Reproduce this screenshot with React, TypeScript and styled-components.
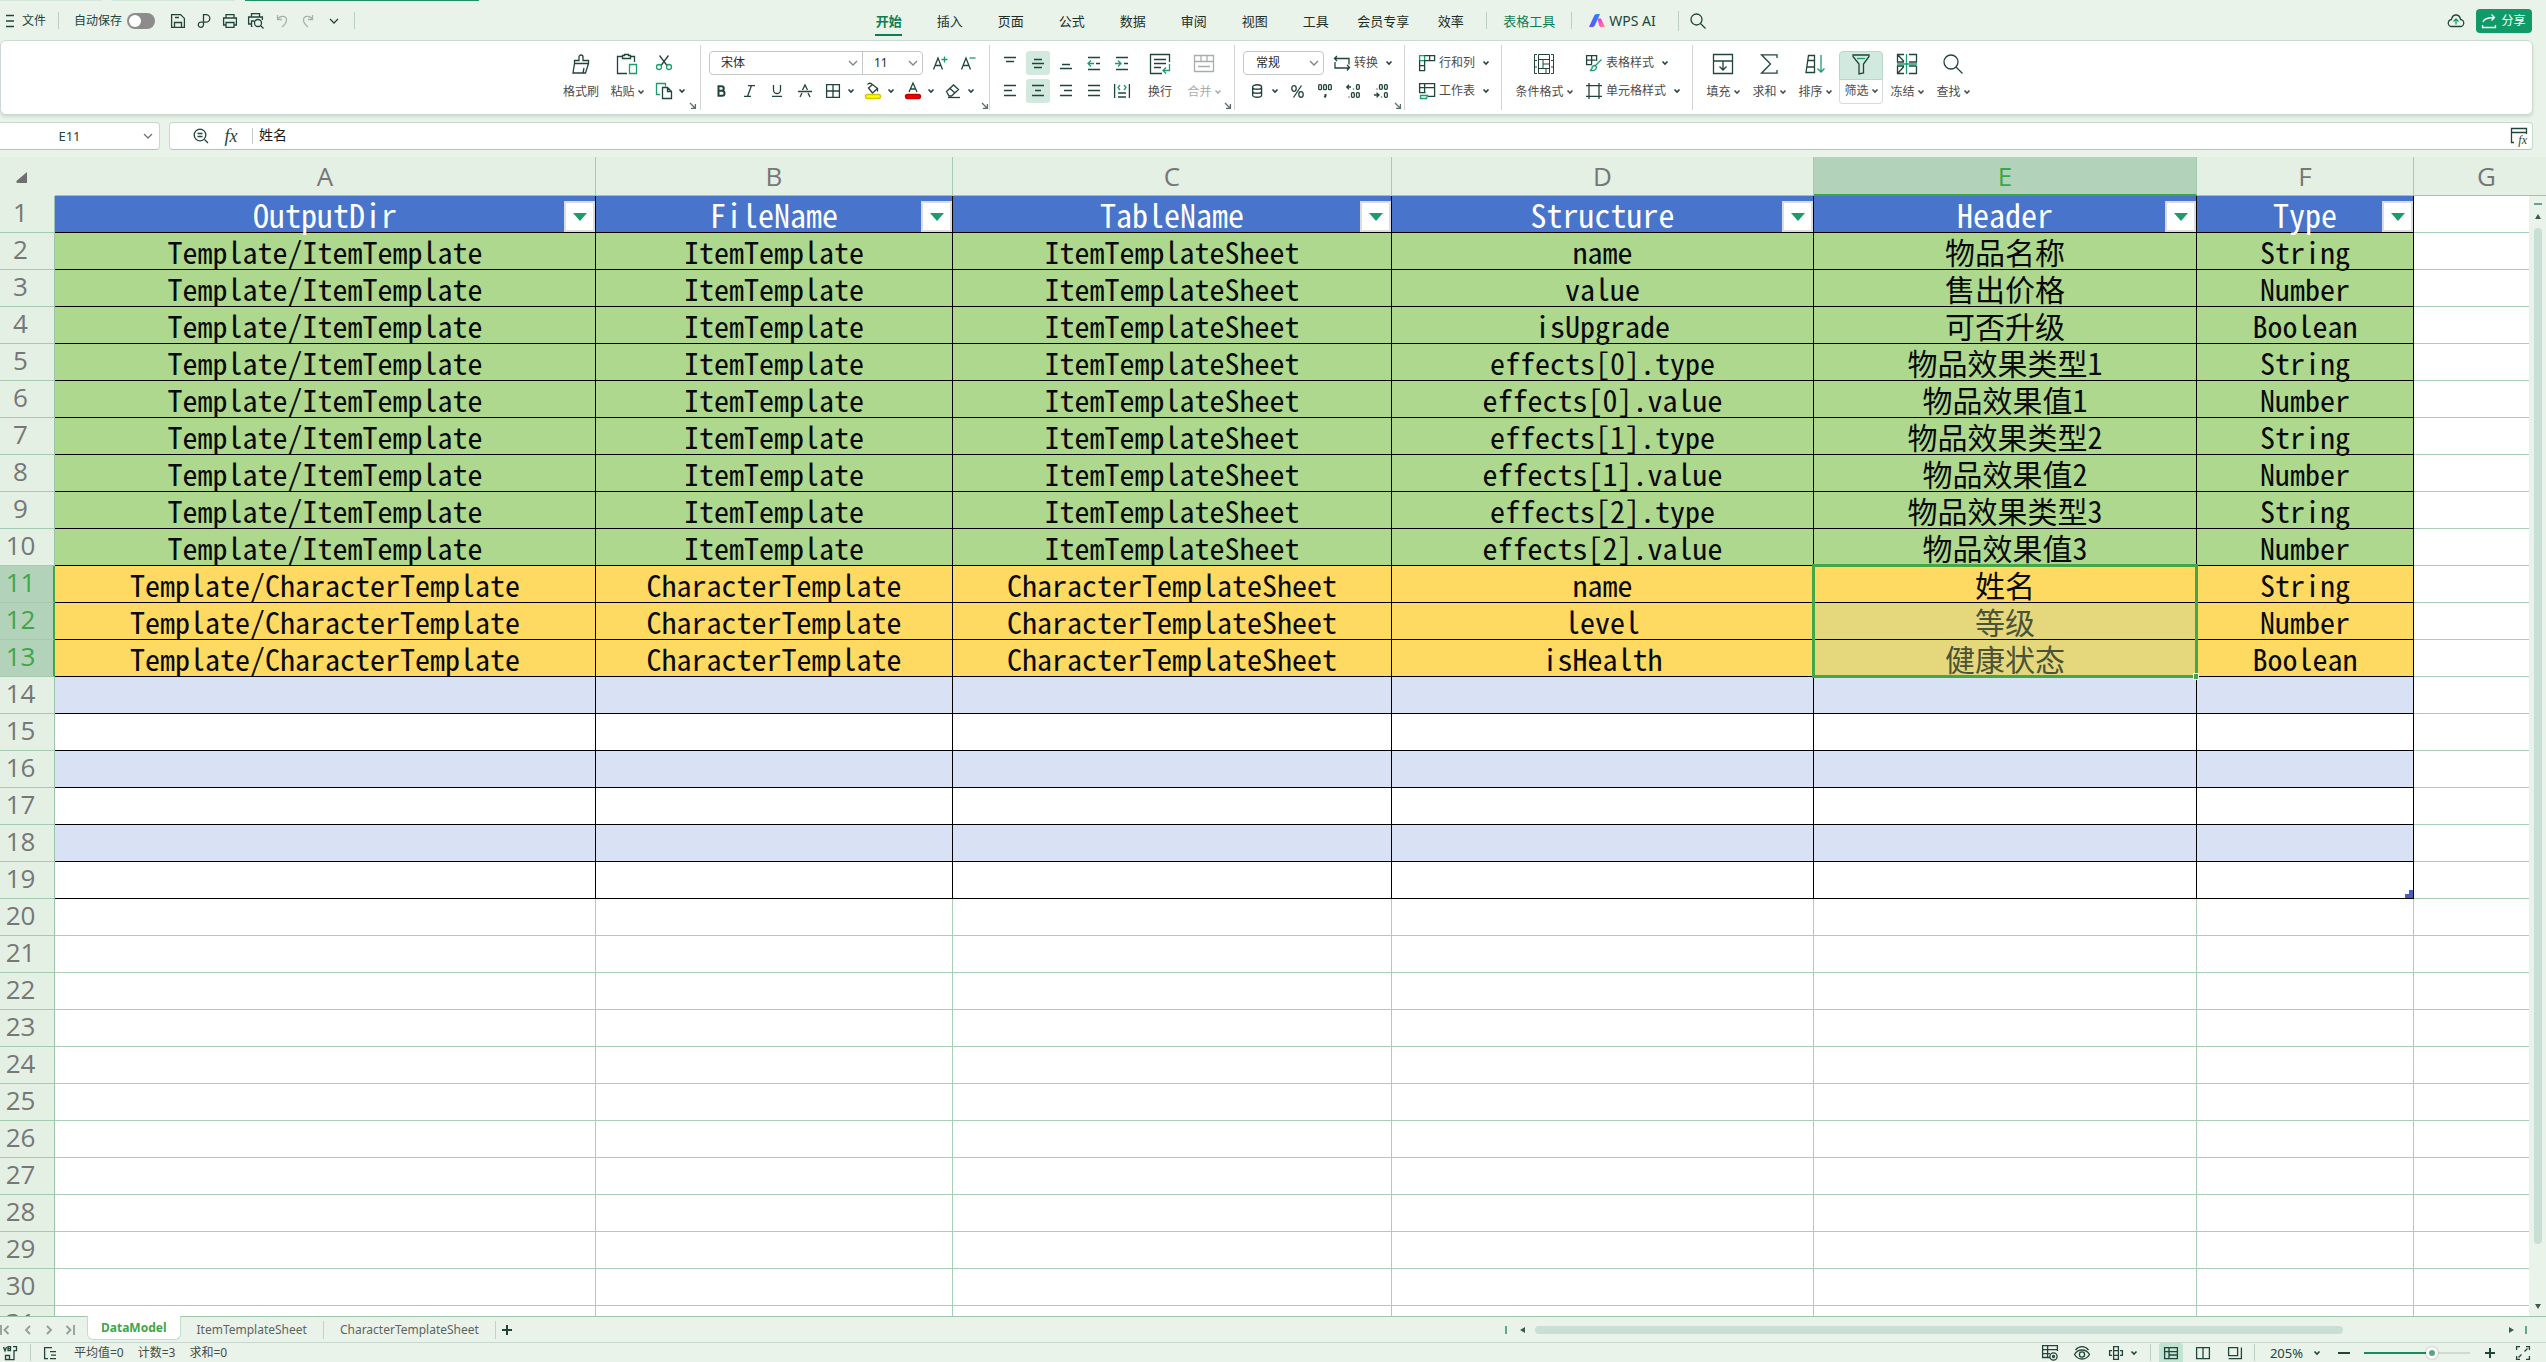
import React from "react";
import styled, { createGlobalStyle, css } from "styled-components";

const ink = "#21453a";
const accent = "#1b9c6b";
const brand = "#0f7d53";
const line = "#a9cfb8";
const ui = `"Noto Sans", "Noto Sans CJK SC", sans-serif`;
const cellFont = `"Noto Sans Mono CJK SC", "Liberation Mono", "Noto Sans CJK SC", monospace`;

const Global = createGlobalStyle`
  *, *::before, *::after { box-sizing: border-box; }
  html, body { margin: 0; height: 100%; overflow: hidden; }
  body { background: #eaf3ea; color: ${ink}; font-family: ${ui}; font-size: 12px; line-height: 16px; }
  button, input, select { font: inherit; color: inherit; margin: 0; padding: 0; border: 0; background: none; }
`;

const Page = styled.div`
  display: flex;
  flex-direction: column;
  height: 100vh;
  overflow: hidden;
`;
const Spacer = styled.span<{ $w: number }>`
  flex: none;
  width: ${(p) => p.$w}px;
`;

/* ---------- icons ---------- */
const Svg = styled.svg`
  display: block;
  flex: none;
  overflow: visible;
  fill: none;
  stroke: currentColor;
  stroke-width: 1.3;
`;
const g = { stroke: accent };

const icons: Record<string, [number, number, React.ReactNode]> = {
  menu: [8, 12, <path d="M0 .5h8M0 6h8M0 11.500h8" />],
  save: [14, 14, <path d="M.600 13.400V.600h9l3.800 3.800v9zM3.500 13V8.500h7V13M4 3.500h4" />],
  output: [14, 14, <path d="M6.500 .600h2.500a3.800 3.800 0 0 1 0 7.600H4.500a2.600 2.600 0 1 0 2 2.600zM6.500 .600v10" />],
  print: [14, 14, <path d="M3 4V.600h8V4M3 11H.600V4h12.800v7H11M3 8.500h8v4.900H3z" />],
  preview: [16, 16, <><path d="M3.500 4V.600h8V4M3.500 11H.600V4h13.800v3M4.500 13.400h-1V8h3" /><circle cx="10" cy="10" r="3.500" /><path d="M12.500 12.500l3 3" /></>],
  undo: [12, 14, <path d="M1.500 1v4.500H6M1.500 5.500C4 1 10.500 1.500 10.500 6c0 3-2 5-4.500 7" />],
  redo: [12, 14, <path d="M10.500 1v4.500H6M10.500 5.500C8 1 1.500 1.500 1.500 6c0 3 2 5 4.500 7" />],
  down: [10, 6, <path d="M1 1l4 4 4-4" />],
  caret: [6, 4, <path d="M.5 .500l2.500 2.500L5.500 .500" strokeWidth="1.600" />],
  search: [16, 16, <><circle cx="6.500" cy="6.500" r="5.500" /><path d="M10.500 10.500l5 5" /></>],
  zoomFx: [16, 16, <><circle cx="7" cy="7" r="5.800" /><path d="M11.500 11.500l3.500 3.500M4.500 5.500h5M4.500 8.500h5" /></>],
  cloud: [16, 14, <><path d="M4 12.500a3.500 3.500 0 0 1-.500-7C4.500-.500 11.500-.500 12.500 5.500a3.500 3.500 0 0 1-.500 7z" /><path style={g} d="M8 10.500v-5M5.500 7.500L8 5l2.500 2.500" /></>],
  share: [14, 14, <path d="M1 8C2 4.500 6 3.500 12.500 3.500M9.500 .500l3 3-3 3M.500 11v2.500h13V11" />],
  brush: [20, 20, <path d="M3.500 9.500v-3H8V3a2 2 0 0 1 4 0v3.500h5.500v3zM3.500 9.500L2 19h12.500l3-9.500M13 14l-1 5" />],
  paste: [20, 20, <><path d="M5 2.500H.500v17H10M14 2.500h3.500V8M5.500 4.500v-3h2V.500h4v1h2v3z" /><path style={g} d="M12.500 10.500h7v9h-7z" /></>],
  cut: [16, 16, <><path d="M3.500 .500l7.500 10M12.500 .500L5 10.500" /><g style={g}><circle cx="3" cy="12" r="2.500" /><circle cx="13" cy="12" r="2.500" /></g></>],
  copy: [16, 16, <><path style={g} d="M4 11.500H.500V.500h9v3" /><path d="M6.500 4.500h5l4 4v7h-9zM11.500 4.500v4h4" /></>],
  bigger: [14, 14, <><path d="M.500 13.500L5 2l4.500 11.500M2.500 9.500H8" /><path style={g} d="M8.500 3.500h6M11.500 .500v6" /></>],
  smaller: [14, 14, <><path d="M.500 13.500L5 2l4.500 11.500M2.500 9.500H8" /><path style={g} d="M8.500 2h6" /></>],
  bold: [8, 12, <path strokeWidth="2" d="M1.500 1.200h3a2.300 2.300 0 0 1 0 4.600h-3zM1.500 5.800h3.500a2.500 2.500 0 0 1 0 5h-3.500z" />],
  italic: [11, 12, <path d="M4 .600h7M0 11.400h7M7.500 .600l-4 10.800" />],
  under: [10, 12, <path d="M1.500 0v5a3.500 3.500 0 0 0 7 0V0M0 11.400h10" />],
  strike: [14, 12, <path d="M2 12l2-4M4.500 5L7 0l2.500 5M10 8l2 4M0 6.500h14" />],
  borders: [14, 14, <path d="M.600 .600h12.800v12.800H.600zM7 .600v12.800M.600 7h12.800" />],
  bucket: [16, 16, <><path d="M3.500 5l4-3.500 5 4-5 4.500zM7.500 2C6-.500 3.500 0 2.500 1.500M12.500 5.500v3" /><rect x=".500" y="11.500" width="15" height="4" rx="2" fill="#ffff00" stroke="#cfc800" /></>],
  fontColor: [16, 16, <><path d="M4 9L8 0l4 9M5.500 6h5" /><rect x=".500" y="11.500" width="15" height="4" rx="2" fill="#f00000" stroke="#c40000" /></>],
  eraser: [16, 14, <><path d="M1.500 7.500l7-6.500 5 4.500-7 6.500H4zM5 4.500l5 4.500" /><path d="M3 13.500h12" /></>],
  top: [14, 14, <path d="M1 1.500h12M3 5.500h8" />],
  middle: [14, 14, <path d="M3 3.500h8M1 7.500h12M3 11.500h8" />],
  bottom: [14, 14, <path d="M3 8.500h8M1 12.500h12" />],
  outdent: [14, 14, <><path d="M1 1.500h12M9 7.500h4M1 13.500h12" /><path style={g} d="M7 7.500H1M4 4.500l-3 3 3 3" /></>],
  indent: [14, 14, <><path d="M1 1.500h12M9 7.500h4M1 13.500h12" /><path style={g} d="M0 7.500h6M3 4.500l3 3-3 3" /></>],
  left: [14, 14, <path d="M1 1.500h12M1 6.500h8M1 11.500h12" />],
  center: [14, 14, <path d="M1 1.500h12M4 6.500h6M1 11.500h12" />],
  right: [14, 14, <path d="M1 1.500h12M5 6.500h8M1 11.500h12" />],
  justify: [14, 14, <path d="M1 1.500h12M1 6.500h12M1 11.500h12" />],
  spread: [16, 14, <><path d="M.600 0v14M15.400 0v14M4 9h8M4 13h8" /><path style={g} d="M6 1L4 3.500 6 6M10 1l2 2.500L10 6" /></>],
  wrap: [20, 20, <><path d="M12 19.500H.500V.500h19V8M4 5.500h12M4 9.500h12M4 13.500h7" /><path style={g} d="M19.500 10v6.500h-6M16 13.500l-3 3 3 3" /></>],
  merge: [20, 18, <path d="M.500 .500h19v16H.500zM.500 6.500h19M7 .500v6M13 .500v6M4 11.500h12" />],
  convert: [16, 16, <path d="M3 1L.500 3.500 3 6M.500 3.500H15v6M13 10l2.500 2.500L13 15.500M15 13H1V7" />],
  coin: [10, 14, <path d="M.600 3c0-3 9-3 9 0v8c0 3-9 3-9 0zM.600 3c0 3 9 3 9 0M.600 7c0 3 9 3 9 0" />],
  percent: [13, 13, <><ellipse cx="3" cy="3.500" rx="2.200" ry="2.800" /><ellipse cx="10" cy="9.500" rx="2.200" ry="2.800" /><path d="M10.500 .500l-8 12" /></>],
  thousand: [14, 14, <><rect x=".700" y=".700" width="2.800" height="5" rx="1" /><rect x="5.600" y=".700" width="2.800" height="5" rx="1" /><rect x="10.500" y=".700" width="2.800" height="5" rx="1" /><path strokeWidth="2" d="M7.500 10v2l-1 1.500" /></>],
  decUp: [14, 14, <><path d="M3 .700L.700 3 3 5.400M.700 3H5M7.500 5.500v-1" /><rect x="10.500" y=".700" width="2.800" height="4.600" rx="1" /><path d="M3 13.500v-1" /><rect x="5.500" y="8.700" width="2.800" height="4.600" rx="1" /><rect x="10.500" y="8.700" width="2.800" height="4.600" rx="1" /></>],
  decDown: [14, 14, <><path d="M3 5.500v-1" /><rect x="5.500" y=".700" width="2.800" height="4.600" rx="1" /><rect x="10.500" y=".700" width="2.800" height="4.600" rx="1" /><path d="M2.500 8.700L5 11l-2.500 2.400M5 11H0M7.500 13.500v-1" /><rect x="10.500" y="8.700" width="2.800" height="4.600" rx="1" /></>],
  rowcol: [16, 16, <><path style={g} d="M.600 .600h5v5h-5z" /><path d="M5.600 .600h10v5h-10M10.600 .600v5M.600 5.600v10h5v-10M.600 10.600h5" /></>],
  worksheet: [16, 16, <><path d="M.600 10V.600h15v12.800H9M.600 4.600h15M5.600 .600v9.400M.600 9.600h6" /><path style={g} d="M1.500 12.500h7l-1 3h-6z" /></>],
  condFormat: [20, 20, <path strokeWidth="1" d="M3 .500H.500v6H3M.500 6.500v6.500H3M.500 13v6.500H3M17 .500h2.500v6H17M19.500 6.500v6.500H17M19.500 13v6.500H17M4.500 .500h11v19h-11zM4.500 5.500h11M9 10h6.500M4.500 14.500h11M9 5.500v9M12 14.500v5" />],
  tableStyle: [16, 16, <><path d="M6 9.600H.600V.600h10V6M.600 5.100h9M5.600 .600v9" /><path style={g} d="M15.500 4.500l-6 6M9 10.500c-2 0-3 1-3 3l-1.500 2c3 .500 6-.500 6-3.500z" /></>],
  cellStyle: [16, 16, <path d="M3 0v16M13 0v16M0 2.600h16M0 13.400h16" />],
  fill: [20, 20, <path d="M.500 .500h19V7H.500zM5 7H.500v12.500h19V7H15M10 7v8.500M6.500 12.500L10 16l3.500-3.500" />],
  sum: [18, 20, <path d="M17 4V.800H1.500L10.500 10 1.500 19.200H17V16" />],
  sort: [20, 20, <><path d="M1 18.500L3.500 1.500h6v17zM3 6.500h6.500M2 13h7.500" /><path style={g} d="M16 1v17M12.500 14.500L16 18l3.500-3.500" /></>],
  filter: [18, 20, <><path d="M1 1h16v1.500L11.500 10v9L7 20V10L1 2.500z" /><path style={g} d="M5 4.500h8" /></>],
  freeze: [20, 20, <><path d="M7 .500H.500V8H7M12 .500h7.500V8H12M19.500 12v7.500H12M12 12h7.500M7 19.500H.500V12H7M1 1l6 6.500M7 12.500L1 19" /><path style={g} d="M0 10h20M9.500 0v20" /></>],
  find: [20, 20, <><circle cx="8" cy="8" r="7" /><path d="M13 13l6.500 6.500" /></>],
  launcher: [6, 6, <path stroke="#5d6d67" d="M0 0l5 5M5.400 1v4.400H1" />],
  fxPanel: [16, 16, <path d="M3 14.500H.500V.500h15V6M.500 4.500h15" />],
  first: [10, 10, <path strokeWidth="1.800" d="M1 0v10M8.500 1l-4 4 4 4" />],
  prev: [6, 10, <path strokeWidth="1.800" d="M5 1L1 5l4 4" />],
  next: [6, 10, <path strokeWidth="1.800" d="M1 1l4 4-4 4" />],
  last: [10, 10, <path strokeWidth="1.800" d="M1.500 1l4 4-4 4M9 0v10" />],
  plus: [10, 10, <path strokeWidth="2" d="M5 0v10M0 5h10" />],
  minus: [12, 10, <path strokeWidth="2" d="M0 5h12" />],
  macro: [14, 14, <path d="M.500 1l1.500 4 1.500-4M5 .600h2.500v4H5zM5 2.600h2.500M10 .600h3.500v4H11v9H6.500M2.500 13.500h4v-4h-4z" />],
  record: [12, 12, <path d="M8 .600H.600v11H4M6 4.600h6M7 8.100h5M6 11.600h6" />],
  gridEye: [16, 16, <><path d="M8 12.500H.600V.600h14.800V6M.600 4.600h14.800M.600 8.600H8M5.600 .600v12" /><circle cx="11.500" cy="11.500" r="3.600" /><circle cx="11.500" cy="11.500" r="1" /></>],
  eye: [16, 14, <><path d="M.500 8.500C4 2.500 12 2.500 15.500 8.500 12 14.500 4 14.500 .500 8.500zM1.500 4C5-.500 11-.500 14.500 4" /><circle cx="8" cy="8.500" r="2.600" /></>],
  focus: [14, 14, <path d="M4.600 4.600V.600h4.800v4M4.600 9.400v4h4.800v-4M3 4.600H.600v4.800H3M11 4.600h2.400v4.800H11M4.600 4.600h4.800v4.800H4.600z" />],
  viewNormal: [14, 12, <path d="M.600 .600h12.800v11H.600zM.600 4.600h12.800M5 .600v11M5 8h8.400" />],
  viewPage: [14, 12, <path d="M.600 .600h12.800v11H.600zM7 .600v11" />],
  viewBreak: [14, 12, <path d="M.600 .600h9v8h-9zM13.400 .600v11H.600" />],
  expand: [14, 14, <path d="M.600 4V.600H4M10 .600h3.400V4M13.400 10v3.400H10M4 13.400H.600V10M8.500 5.500l3-3M5.500 8.500l-3 3" />],
};

const Icon = ({ name }: { name: string }) => {
  const [w, h, body] = icons[name];
  return (
    <Svg width={w} height={h} viewBox={`0 0 ${w} ${h}`} aria-hidden="true">
      {body}
    </Svg>
  );
};

/* ---------- title bar ---------- */
const DocStrip = styled.div`
  display: flex;
  flex: none;
  gap: 10px;
  height: 1px;
`;
const DocEdge = styled.div<{ $w: number; $on?: boolean }>`
  width: ${(p) => p.$w}px;
  background: ${(p) => (p.$on ? "#219065" : "#d3e8da")};
`;
const TitleBar = styled.header`
  display: grid;
  grid-template-columns: 1fr auto 1fr;
  align-items: center;
  flex: none;
  height: 39px;
  padding-right: 14px;
`;
const QuickAccess = styled.div`
  display: flex;
  align-items: center;
  padding-left: 6px;
`;
const FileButton = styled.button`
  display: flex;
  align-items: center;
  gap: 8px;
`;
const Divider = styled.span<{ $mx?: number; $h?: number }>`
  flex: none;
  width: 1px;
  height: ${(p) => p.$h ?? 17}px;
  margin: 0 ${(p) => p.$mx ?? 12}px;
  background: #bccdc3;
`;
const AutoSave = styled.label`
  display: flex;
  align-items: center;
  gap: 5px;
  margin: 0 10px 0 3px;
`;
const Toggle = styled.input`
  appearance: none;
  display: flex;
  align-items: center;
  width: 28px;
  height: 16px;
  padding: 2px;
  border-radius: 8px;
  background: #8c8c8c;
  &::before {
    content: "";
    width: 12px;
    height: 12px;
    border-radius: 6px;
    background: #fff;
  }
`;
const ToolButton = styled.button<{ $dim?: boolean }>`
  display: flex;
  justify-content: center;
  align-items: center;
  width: 26px;
  height: 24px;
  color: ${(p) => (p.$dim ? "#a7b2ac" : ink)};
`;
const Tabs = styled.nav`
  display: flex;
  align-items: center;
  padding-left: 32px;
  font-size: 13px;
  line-height: 20px;
`;
const Tab = styled.button<{ $on?: boolean; $green?: boolean }>`
  display: flex;
  flex-direction: column;
  align-items: center;
  min-width: 61px;
  padding: 5px 11px 0;
  white-space: nowrap;
  color: ${(p) => (p.$on || p.$green ? brand : "#1d2f28")};
  font-weight: ${(p) => (p.$on ? 700 : 400)};
  &::after {
    content: "";
    width: 27px;
    height: 2px;
    margin-top: 3px;
    background: ${(p) => (p.$on ? brand : "transparent")};
  }
`;
const AiTab = styled.button`
  display: flex;
  align-items: center;
  gap: 4px;
  padding: 0 11px 0 12px;
  font-size: 14px;
`;
const RightTools = styled.div`
  display: flex;
  justify-content: flex-end;
  align-items: center;
  gap: 12px;
`;
const ShareButton = styled.button`
  display: flex;
  align-items: center;
  justify-content: center;
  gap: 5px;
  width: 56px;
  height: 24px;
  border-radius: 4px;
  background: #109a68;
  color: #fff;
`;

/* ---------- ribbon ---------- */
const Ribbon = styled.section`
  display: flex;
  justify-content: center;
  flex: none;
  height: 75px;
  margin-right: 13px;
  padding: 4px 0 4px 4px;
  border: 1px solid #ccd9d0;
  border-radius: 6px;
  background: #fff;
  box-shadow: 0 2px 3px rgba(60, 90, 70, 0.16);
`;
const Group = styled.div<{ $w: number; $pl: number; $last?: boolean }>`
  display: flex;
  flex: none;
  width: ${(p) => p.$w}px;
  padding-left: ${(p) => p.$pl}px;
  border-right: 1px solid ${(p) => (p.$last ? "transparent" : "#d4d4d4")};
`;
const Stack = styled.div<{ $ml?: number }>`
  display: flex;
  flex-direction: column;
  padding-top: 4px;
  margin-left: ${(p) => p.$ml ?? 0}px;
`;
const Row = styled.div`
  display: flex;
  align-items: center;
  height: 28px;
`;
const Big = styled.button<{ $w?: number; $ml?: number; $dim?: boolean }>`
  display: flex;
  flex-direction: column;
  align-items: center;
  flex: none;
  width: ${(p) => p.$w ?? 42}px;
  height: 53px;
  margin: 6px 0 0 ${(p) => p.$ml ?? 0}px;
  color: ${(p) => (p.$dim ? "#a9aeab" : ink)};
`;
const BigArt = styled.span<{ $on?: boolean }>`
  display: flex;
  justify-content: center;
  align-items: center;
  width: 100%;
  height: 29px;
  padding-bottom: 4px;
  ${(p) => p.$on && css`
    background: #d2e9df;
    border: 1px solid #b9d8c9;
    border-radius: 4px 4px 0 0;
  `}
`;
const BigText = styled.span<{ $on?: boolean; $dim?: boolean }>`
  display: flex;
  justify-content: center;
  align-items: center;
  gap: 3px;
  width: 100%;
  height: 24px;
  padding-bottom: 1px;
  white-space: nowrap;
  color: ${(p) => (p.$dim ? "#a9aeab" : "#4c4c4c")};
  ${(p) => p.$on && css`
    border: 1px solid #d6dcd8;
    border-top: 0;
    border-radius: 0 0 4px 4px;
  `}
`;
const Slot = styled.button<{ $on?: boolean }>`
  display: flex;
  justify-content: center;
  align-items: center;
  width: 24px;
  height: 24px;
  margin: 0 2px;
  border-radius: 3px;
  background: ${(p) => (p.$on ? "#d2e9df" : "transparent")};
`;
const Pair = styled.span<{ $tight?: boolean }>`
  display: flex;
  align-items: center;
  padding-right: ${(p) => (p.$tight ? 0 : 2)}px;
  & > ${Slot} { margin-right: 0; margin-left: ${(p) => (p.$tight ? 0 : 2)}px; }
`;
const CaretButton = styled.button`
  display: flex;
  justify-content: center;
  align-items: center;
  width: 12px;
  height: 24px;
`;
const Launcher = styled.button`
  align-self: flex-end;
  width: 8px;
  height: 8px;
  margin: 0 2px 0 auto;
`;
const Combo = styled.span<{ $gap?: number }>`
  display: flex;
  height: 24px;
  margin-right: ${(p) => p.$gap ?? 3}px;
  border: 1px solid #c4c9c6;
  border-radius: 4px;
`;
const Field = styled.span<{ $w: number; $line?: boolean }>`
  display: grid;
  align-items: center;
  width: ${(p) => p.$w}px;
  border-left: ${(p) => (p.$line ? "1px solid #c4c9c6" : "0")};
  color: #7d8581;
  & > * { grid-area: 1 / 1; }
  & > svg { justify-self: end; margin-right: 4px; pointer-events: none; }
`;
const Select = styled.select<{ $pl: number }>`
  appearance: none;
  width: 100%;
  height: 22px;
  padding-left: ${(p) => p.$pl}px;
  color: #2a2a2a;
`;
const TextTool = styled.button`
  display: flex;
  align-items: center;
  gap: 4px;
  height: 24px;
  white-space: nowrap;
  & > span { color: #4c4c4c; }
  & > span + svg { margin-left: 4px; }
`;

/* ---------- formula bar ---------- */
const FormulaRow = styled.section`
  display: flex;
  flex: none;
  gap: 9px;
  height: 42px;
  padding: 7px 13px 7px 0;
`;
const NameBox = styled.div`
  display: flex;
  align-items: center;
  width: 160px;
  padding-right: 6px;
  border: 1px solid #c6d9ce;
  border-left: 0;
  border-bottom-color: #afc5b9;
  border-radius: 0 4px 4px 0;
  background: #fff;
  color: #6c7772;
`;
const NameInput = styled.input`
  flex: 1;
  min-width: 0;
  padding-right: 4px;
  text-align: center;
  font-size: 13px;
  color: ${ink};
`;
const FormulaBox = styled.div`
  display: flex;
  align-items: center;
  flex: 1;
  padding: 0 5px 0 16px;
  border: 1px solid #c6d9ce;
  border-bottom-color: #afc5b9;
  border-radius: 4px;
  background: #fff;
`;
const BarButton = styled.button`
  display: flex;
  justify-content: center;
  align-items: center;
  width: 30px;
  height: 24px;
`;
const Fx = styled.span<{ $s: number }>`
  font: italic 400 ${(p) => p.$s}px/16px "Liberation Serif", serif;
`;
const FormulaInput = styled.input`
  flex: 1;
  padding-bottom: 2px;
  font-size: 14px;
  line-height: 20px;
  color: #1a1a1a;
`;
const FxPanel = styled.button`
  display: grid;
  & > * { grid-area: 1 / 1; }
  & > span { align-self: end; justify-self: end; line-height: 8px; }
`;

/* ---------- sheet ---------- */
const SheetArea = styled.main`
  display: grid;
  flex: 1;
  min-height: 0;
  grid-template-columns: minmax(0, 1fr);
  grid-template-rows: minmax(0, 1fr);
  overflow: hidden;
  background: #e4f0e4;
  & > * { grid-area: 1 / 1; }
`;
const TableClip = styled.div`
  overflow: hidden;
`;
const Sheet = styled.table`
  table-layout: fixed;
  width: 2560px;
  border-collapse: separate;
  border-spacing: 0;
`;
const headText = css`
  font: 400 26px/36px "Open Sans", "Noto Sans", sans-serif;
  color: #777;
`;
const ColHead = styled.th<{ $on?: boolean }>`
  ${headText}
  height: 39px;
  padding: 0;
  border-right: 1px solid #a5cab2;
  border-bottom: 1px solid #9cc4aa;
  background: #e4f0e4;
  ${(p) => p.$on && css`
    background: #b2d2ba;
    color: #3fa648;
    border-bottom: 2px solid #3fa648;
  `}
`;
const Corner = styled.th`
  height: 39px;
  padding: 2px 0 0 16px;
  border-bottom: 1px solid #e4f0e4;
  background: #e4f0e4;
  & > svg { fill: #6f6f6f; stroke: none; }
`;
const RowHead = styled.th<{ $on?: boolean }>`
  ${headText}
  height: 37px;
  padding: 0 13px 0 0;
  border-right: 1px solid #9cc4aa;
  border-bottom: 1px solid #a5cab2;
  background: #e4f0e4;
  & > div { height: 36px; line-height: 33px; }
  ${(p) => p.$on && css`
    padding-right: 12px;
    background: #b2d2ba;
    color: #3fa648;
    border-right: 2px solid #3fa648;
  `}
`;
type Tone = "head" | "green" | "yellow" | "picked" | "band" | "plain" | "empty";
const fills: Record<Tone, string> = {
  head: "#4874cb",
  green: "#add88d",
  yellow: "#ffda62",
  picked: "#e5d77c",
  band: "#d9e2f4",
  plain: "#fff",
  empty: "#fff",
};
const Cell = styled.td<{ $tone: Tone; $anchor?: boolean }>`
  position: ${(p) => (p.$anchor ? "relative" : "static")};
  height: 37px;
  padding: 0;
  border-right: 1px solid ${(p) => (p.$tone === "empty" ? line : "#000")};
  border-bottom: 1px solid ${(p) => (p.$tone === "empty" ? line : "#000")};
  background: ${(p) => fills[p.$tone]};
  color: ${(p) => (p.$tone === "head" ? "#fff" : p.$tone === "picked" ? "#4a5338" : "#0a0a0a")};
  font: 400 ${(p) => (p.$tone === "head" ? 32 : 30)}px/36px ${cellFont};
  text-align: center;
  white-space: nowrap;
`;
const HeadCell = styled.div`
  display: grid;
  height: 36px;
  & > * { grid-area: 1 / 1; }
`;
const FilterButton = styled.button`
  display: flex;
  justify-content: center;
  align-items: center;
  align-self: end;
  justify-self: end;
  width: 31px;
  height: 31px;
  border: 2px solid #dcdcdc;
  background: #fff;
  & > svg { fill: ${accent}; stroke: none; }
`;
const SelectionFrame = styled.span`
  position: absolute;
  z-index: 2;
  top: -2px;
  left: -2px;
  right: -2px;
  height: 114px;
  border: 3px solid #41a748;
  pointer-events: none;
  &::after {
    content: "";
    position: absolute;
    right: -4px;
    bottom: -5px;
    width: 6px;
    height: 7px;
    border: 1px solid #fff;
    background: #41a748;
  }
`;
const ResizeMark = styled.span`
  position: absolute;
  right: 0;
  bottom: 0;
  & > svg { fill: #4a5fb5; stroke: none; }
`;
const VScroll = styled.div`
  display: flex;
  flex-direction: column;
  align-items: center;
  justify-self: end;
  width: 17px;
  margin-top: 39px;
  padding: 7px 0 7px 1px;
  background: #e9f3ea;
  z-index: 3;
`;
const Mark = styled.span<{ $v?: boolean }>`
  flex: none;
  width: ${(p) => (p.$v ? 2 : 8)}px;
  height: ${(p) => (p.$v ? 8 : 2)}px;
  background: #62a487;
`;
const ScrollArrow = styled.button<{ $my?: number }>`
  display: flex;
  flex: none;
  margin: ${(p) => p.$my ?? 0}px 0;
  & > svg { fill: #3b5a4d; stroke: none; }
`;
const VTrack = styled.div`
  flex: 1;
  width: 8px;
  padding-bottom: 60px;
`;
const VThumb = styled.div`
  height: 100%;
  border-radius: 4px;
  background: #c8dfd6;
`;

/* ---------- bottom bars ---------- */
const TabBar = styled.footer`
  display: flex;
  flex: none;
  height: 27px;
  border-top: 1px solid #9cc4aa;
  border-bottom: 1px solid #c8d7cd;
`;
const SheetNav = styled.div`
  display: flex;
  align-items: center;
  gap: 15px;
  width: 87px;
  color: #929d97;
  & > button:last-child { margin-left: -2px; }
`;
const PlainButton = styled.button`
  display: flex;
  align-items: center;
`;
const SheetTab = styled.button<{ $on?: boolean }>`
  padding: 0 16px;
  height: 25px;
  font: 400 12px/24px "Noto Sans", sans-serif;
  color: #5b6560;
  ${(p) => p.$on && css`
    height: 24px;
    padding: 0 13px;
    margin-top: -1px;
    border: 1px solid #c0dfcb;
    border-top: 0;
    border-radius: 0 0 6px 6px;
    background: #fff;
    color: #3fa648;
    font-weight: 700;
  `}
`;
const TabRule = styled.span`
  align-self: center;
  width: 1px;
  height: 18px;
  background: #c3d2c9;
`;
const AddSheet = styled.button`
  display: flex;
  justify-content: center;
  align-items: center;
  width: 22px;
`;
const HScroll = styled.div`
  display: flex;
  align-items: center;
  width: 1041px;
  margin-left: auto;
  padding-right: 19px;
`;
const HTrack = styled.div`
  flex: 1;
  margin: 0 0 0 10px;
`;
const HThumb = styled.div`
  width: 83%;
  height: 8px;
  border-radius: 4px;
  background: #c8dfd6;
`;
const StatusBar = styled.footer`
  display: flex;
  align-items: center;
  flex: none;
  height: 19px;
  padding: 0 16px 0 3px;
`;
const Stats = styled.div`
  display: flex;
  gap: 14px;
  margin: 0 auto 0 18px;
  color: #444c48;
  line-height: 18px;
`;
const ViewButton = styled.button<{ $on?: boolean; $w?: number }>`
  display: flex;
  justify-content: center;
  align-items: center;
  width: ${(p) => p.$w ?? 32}px;
  height: 19px;
  border-radius: 3px 3px 0 0;
  background: ${(p) => (p.$on ? "#c3e3d3" : "transparent")};
`;
const ZoomLabel = styled.button`
  display: flex;
  align-items: center;
  gap: 11px;
  margin-right: 18px;
  font-size: 13px;
`;
const ZoomRange = styled.input<{ $fill: number }>`
  appearance: none;
  width: 106px;
  height: 12px;
  margin: 0 15px 0 14px;
  background: linear-gradient(to right, #1c8a5e ${(p) => p.$fill}%, #cddbd3 ${(p) => p.$fill}%) center / 100% 2px no-repeat;
  &::-webkit-slider-thumb {
    appearance: none;
    width: 12px;
    height: 12px;
    border: 3px solid #fff;
    border-radius: 6px;
    background: #5fa287;
    box-shadow: 0 0 2px rgba(0, 0, 0, 0.35);
  }
`;

/* ---------- data ---------- */
const tabs = ["开始", "插入", "页面", "公式", "数据", "审阅", "视图", "工具", "会员专享", "效率"];
const columns = ["A", "B", "C", "D", "E", "F", "G"];
const widths = [55, 541, 357, 439, 422, 383, 217, 146];
const headings = ["OutputDir", "FileName", "TableName", "Structure", "Header", "Type"];
const item = ["Template/ItemTemplate", "ItemTemplate", "ItemTemplateSheet"];
const character = ["Template/CharacterTemplate", "CharacterTemplate", "CharacterTemplateSheet"];
const records: string[][] = [
  [...item, "name", "物品名称", "String"],
  [...item, "value", "售出价格", "Number"],
  [...item, "isUpgrade", "可否升级", "Boolean"],
  [...item, "effects[0].type", "物品效果类型1", "String"],
  [...item, "effects[0].value", "物品效果值1", "Number"],
  [...item, "effects[1].type", "物品效果类型2", "String"],
  [...item, "effects[1].value", "物品效果值2", "Number"],
  [...item, "effects[2].type", "物品效果类型3", "String"],
  [...item, "effects[2].value", "物品效果值3", "Number"],
  [...character, "name", "姓名", "String"],
  [...character, "level", "等级", "Number"],
  [...character, "isHealth", "健康状态", "Boolean"],
];
const ROWS = 31;

const toneOf = (row: number, col: number): Tone => {
  if (col === 6 || row > 19) return "empty";
  if (row === 1) return "head";
  if (row <= 10) return "green";
  if (row <= 13) return col === 4 && row > 11 ? "picked" : "yellow";
  return row % 2 === 0 ? "band" : "plain";
};

const Launch = () => (
  <Launcher aria-label="更多设置"><Icon name="launcher" /></Launcher>
);
const Tool = ({ name, label, on }: { name: string; label: string; on?: boolean }) => (
  <Slot aria-label={label} $on={on}><Icon name={name} /></Slot>
);
const DropTool = ({ name, label, tight }: { name: string; label: string; tight?: boolean }) => (
  <Pair $tight={tight}>
    <Tool name={name} label={label} />
    <CaretButton aria-label={`${label}选项`}><Icon name="caret" /></CaretButton>
  </Pair>
);
const BigTool = (p: { name: string; text: string; drop?: boolean; w?: number; ml?: number; on?: boolean; dim?: boolean }) => (
  <Big $w={p.w} $ml={p.ml} $dim={p.dim}>
    <BigArt $on={p.on}><Icon name={p.name} /></BigArt>
    <BigText $on={p.on} $dim={p.dim}>{p.text}{p.drop && <Icon name="caret" />}</BigText>
  </Big>
);
const LabelTool = ({ name, text }: { name: string; text: string }) => (
  <TextTool><Icon name={name} /><span>{text}</span><Icon name="caret" /></TextTool>
);

const AiLogo = () => (
  <Svg width="16" height="14" viewBox="0 0 16 14" aria-hidden="true">
    <defs>
      <linearGradient id="aiA" x1="0" y1="1" x2="1" y2="0">
        <stop offset="0" stopColor="#6a4cff" /><stop offset="1" stopColor="#1a8bff" />
      </linearGradient>
      <linearGradient id="aiB" x1="0" y1="0" x2="1" y2="1">
        <stop offset="0" stopColor="#e62be0" /><stop offset="1" stopColor="#ff8c8c" />
      </linearGradient>
    </defs>
    <path d="M0 13L5 2C5.500 .700 6.500 0 8 0h3L6 11C5.300 12.500 4.500 13 3 13z" fill="url(#aiA)" stroke="none" />
    <path d="M8.500 4.500h3.500L16 13h-3.500c-1.500 0-2-.500-2.500-2z" fill="url(#aiB)" stroke="none" />
  </Svg>
);

const Triangle = ({ w, h, d }: { w: number; h: number; d: string }) => (
  <Svg width={w} height={h} viewBox={`0 0 ${w} ${h}`} aria-hidden="true"><path d={d} /></Svg>
);

export default function App() {
  return (
    <>
      <Global />
      <Page>
        <DocStrip>
          <DocEdge $w={102} /><DocEdge $w={123} /><DocEdge $w={234} $on />
        </DocStrip>
        <TitleBar>
          <QuickAccess>
            <FileButton><Icon name="menu" />文件</FileButton>
            <Divider />
            <AutoSave>自动保存<Toggle type="checkbox" role="switch" /></AutoSave>
            <ToolButton aria-label="保存"><Icon name="save" /></ToolButton>
            <ToolButton aria-label="输出"><Icon name="output" /></ToolButton>
            <ToolButton aria-label="打印"><Icon name="print" /></ToolButton>
            <ToolButton aria-label="打印预览"><Icon name="preview" /></ToolButton>
            <ToolButton aria-label="撤销" $dim><Icon name="undo" /></ToolButton>
            <ToolButton aria-label="恢复" $dim><Icon name="redo" /></ToolButton>
            <ToolButton aria-label="自定义"><Icon name="down" /></ToolButton>
            <Divider $mx={7} />
          </QuickAccess>
          <Tabs>
            {tabs.map((t, i) => <Tab key={t} $on={i === 0}>{t}</Tab>)}
            <Divider $mx={5} />
            <Tab $green>表格工具</Tab>
            <Divider $mx={5} />
            <AiTab><AiLogo />WPS AI</AiTab>
            <Divider $mx={11} $h={20} />
            <PlainButton aria-label="搜索"><Icon name="search" /></PlainButton>
          </Tabs>
          <RightTools>
            <PlainButton aria-label="云同步"><Icon name="cloud" /></PlainButton>
            <ShareButton><Icon name="share" />分享</ShareButton>
          </RightTools>
        </TitleBar>

        <Ribbon>
          <Group $w={141} $pl={0}>
            <BigTool name="brush" text="格式刷" />
            <BigTool name="paste" text="粘贴" drop ml={4} />
            <Stack $ml={4}>
              <Row><Pair $tight><Tool name="cut" label="剪切" /></Pair></Row>
              <Row><DropTool name="copy" label="复制" tight /></Row>
            </Stack>
            <Launch />
          </Group>
          <Group $w={289} $pl={6}>
            <Stack>
              <Row>
                <Spacer $w={2} />
                <Combo>
                  <Field $w={152}>
                    <Select $pl={11} aria-label="字体"><option>宋体</option></Select>
                    <Icon name="down" />
                  </Field>
                  <Field $w={60} $line>
                    <Select $pl={11} aria-label="字号"><option>11</option></Select>
                    <Icon name="down" />
                  </Field>
                </Combo>
                <Tool name="bigger" label="增大字号" />
                <Tool name="smaller" label="减小字号" />
              </Row>
              <Row>
                <Tool name="bold" label="加粗" />
                <Tool name="italic" label="倾斜" />
                <Tool name="under" label="下划线" />
                <Tool name="strike" label="删除线" />
                <DropTool name="borders" label="边框" />
                <DropTool name="bucket" label="填充颜色" />
                <DropTool name="fontColor" label="字体颜色" />
                <DropTool name="eraser" label="清除" />
              </Row>
            </Stack>
            <Launch />
          </Group>
          <Group $w={245} $pl={6}>
            <Stack>
              <Row>
                <Tool name="top" label="顶端对齐" />
                <Tool name="middle" label="垂直居中" on />
                <Tool name="bottom" label="底端对齐" />
                <Tool name="outdent" label="减少缩进" />
                <Tool name="indent" label="增加缩进" />
              </Row>
              <Row>
                <Tool name="left" label="左对齐" />
                <Tool name="center" label="水平居中" on />
                <Tool name="right" label="右对齐" />
                <Tool name="justify" label="两端对齐" />
                <Tool name="spread" label="分散对齐" />
              </Row>
            </Stack>
            <BigTool name="wrap" text="换行" ml={3} />
            <BigTool name="merge" text="合并" drop dim ml={2} />
            <Launch />
          </Group>
          <Group $w={170} $pl={8}>
            <Stack>
              <Row>
                <Combo $gap={10}>
                  <Field $w={79}>
                    <Select $pl={12} aria-label="数字格式"><option>常规</option></Select>
                    <Icon name="down" />
                  </Field>
                </Combo>
                <LabelTool name="convert" text="转换" />
              </Row>
              <Row>
                <DropTool name="coin" label="货币" />
                <Tool name="percent" label="百分比" />
                <Tool name="thousand" label="千位分隔" />
                <Tool name="decUp" label="增加小数位" />
                <Tool name="decDown" label="减少小数位" />
              </Row>
            </Stack>
            <Launch />
          </Group>
          <Group $w={97} $pl={14}>
            <Stack>
              <Row><LabelTool name="rowcol" text="行和列" /></Row>
              <Row><LabelTool name="worksheet" text="工作表" /></Row>
            </Stack>
          </Group>
          <Group $w={191} $pl={10}>
            <BigTool name="condFormat" text="条件格式" drop w={64} />
            <Stack $ml={10}>
              <Row><LabelTool name="tableStyle" text="表格样式" /></Row>
              <Row><LabelTool name="cellStyle" text="单元格样式" /></Row>
            </Stack>
          </Group>
          <Group $w={284} $pl={8} $last>
            <BigTool name="fill" text="填充" drop w={44} />
            <BigTool name="sum" text="求和" drop w={44} ml={2} />
            <BigTool name="sort" text="排序" drop w={44} ml={2} />
            <BigTool name="filter" text="筛选" drop w={44} ml={2} on />
            <BigTool name="freeze" text="冻结" drop w={44} ml={2} />
            <BigTool name="find" text="查找" drop w={44} ml={2} />
          </Group>
        </Ribbon>

        <FormulaRow>
          <NameBox>
            <NameInput aria-label="名称框" defaultValue="E11" />
            <PlainButton aria-label="名称列表"><Icon name="down" /></PlainButton>
          </NameBox>
          <FormulaBox>
            <BarButton aria-label="浏览公式"><Icon name="zoomFx" /></BarButton>
            <BarButton aria-label="插入函数"><Fx $s={18}>fx</Fx></BarButton>
            <Divider $mx={6} $h={16} />
            <FormulaInput aria-label="编辑栏" defaultValue="姓名" />
            <FxPanel aria-label="公式面板"><Icon name="fxPanel" /><Fx $s={12}>fx</Fx></FxPanel>
          </FormulaBox>
        </FormulaRow>

        <SheetArea>
          <TableClip>
            <Sheet>
              <colgroup>{widths.map((w, i) => <col key={i} width={w} />)}</colgroup>
              <thead>
                <tr>
                  <Corner><Triangle w={11} h={11} d="M11 0v11H2c-2 0-2-1.500-1-2.500z" /></Corner>
                  {columns.map((c) => <ColHead key={c} scope="col" $on={c === "E"}>{c}</ColHead>)}
                </tr>
              </thead>
              <tbody>
                {Array.from({ length: ROWS }, (_, i) => i + 1).map((row) => (
                  <tr key={row}>
                    <RowHead scope="row" $on={row >= 11 && row <= 13}><div>{row}</div></RowHead>
                    {columns.map((c, col) => {
                      const selected = row === 11 && col === 4;
                      const corner = row === 19 && col === 5;
                      return (
                        <Cell key={c} $tone={toneOf(row, col)} $anchor={selected || corner}>
                          {row === 1 && col < 6 && (
                            <HeadCell>
                              <span>{headings[col]}</span>
                              <FilterButton aria-label={`筛选 ${headings[col]}`}>
                                <Triangle w={14} h={8} d="M0 0h14L7 8z" />
                              </FilterButton>
                            </HeadCell>
                          )}
                          {row > 1 && records[row - 2]?.[col]}
                          {selected && <SelectionFrame />}
                          {corner && (
                            <ResizeMark><Triangle w={8} h={8} d="M4 0h4v8H0V4h4z" /></ResizeMark>
                          )}
                        </Cell>
                      );
                    })}
                  </tr>
                ))}
              </tbody>
            </Sheet>
          </TableClip>
          <VScroll>
            <Mark />
            <ScrollArrow aria-label="向上滚动" $my={9}><Triangle w={6} h={5} d="M3 0l3 5H0z" /></ScrollArrow>
            <VTrack><VThumb /></VTrack>
            <ScrollArrow aria-label="向下滚动"><Triangle w={6} h={5} d="M0 0h6L3 5z" /></ScrollArrow>
          </VScroll>
        </SheetArea>

        <TabBar>
          <SheetNav>
            <PlainButton aria-label="第一个"><Icon name="first" /></PlainButton>
            <PlainButton aria-label="上一个"><Icon name="prev" /></PlainButton>
            <PlainButton aria-label="下一个"><Icon name="next" /></PlainButton>
            <PlainButton aria-label="最后一个"><Icon name="last" /></PlainButton>
          </SheetNav>
          <SheetTab $on>DataModel</SheetTab>
          <SheetTab>ItemTemplateSheet</SheetTab>
          <TabRule />
          <SheetTab>CharacterTemplateSheet</SheetTab>
          <TabRule />
          <AddSheet aria-label="新建工作表"><Icon name="plus" /></AddSheet>
          <HScroll>
            <Mark $v />
            <Spacer $w={13} />
            <ScrollArrow aria-label="向左滚动"><Triangle w={5} h={6} d="M5 0v6L0 3z" /></ScrollArrow>
            <HTrack><HThumb /></HTrack>
            <ScrollArrow aria-label="向右滚动"><Triangle w={5} h={6} d="M0 0v6l5-3z" /></ScrollArrow>
            <Spacer $w={11} />
            <Mark $v />
          </HScroll>
        </TabBar>
        <StatusBar>
          <PlainButton aria-label="宏"><Icon name="macro" /></PlainButton>
          <Divider $mx={13} />
          <PlainButton aria-label="录制"><Icon name="record" /></PlainButton>
          <Stats><span>平均值=0</span><span>计数=3</span><span>求和=0</span></Stats>
          <ViewButton aria-label="网格线"><Icon name="gridEye" /></ViewButton>
          <ViewButton aria-label="护眼"><Icon name="eye" /></ViewButton>
          <Spacer $w={4} />
          <DropTool name="focus" label="阅读模式" />
          <Divider $mx={8} />
          <ViewButton aria-label="普通视图" $on $w={24}><Icon name="viewNormal" /></ViewButton>
          <Spacer $w={4} />
          <ViewButton aria-label="分页预览"><Icon name="viewPage" /></ViewButton>
          <ViewButton aria-label="页面布局"><Icon name="viewBreak" /></ViewButton>
          <Divider $mx={3} />
          <Spacer $w={12} />
          <ZoomLabel>205%<Icon name="caret" /></ZoomLabel>
          <PlainButton aria-label="缩小"><Icon name="minus" /></PlainButton>
          <ZoomRange type="range" aria-label="缩放" min={0} max={100} defaultValue={66} $fill={65} />
          <PlainButton aria-label="放大"><Icon name="plus" /></PlainButton>
          <Spacer $w={21} />
          <PlainButton aria-label="全屏"><Icon name="expand" /></PlainButton>
        </StatusBar>
      </Page>
    </>
  );
}
